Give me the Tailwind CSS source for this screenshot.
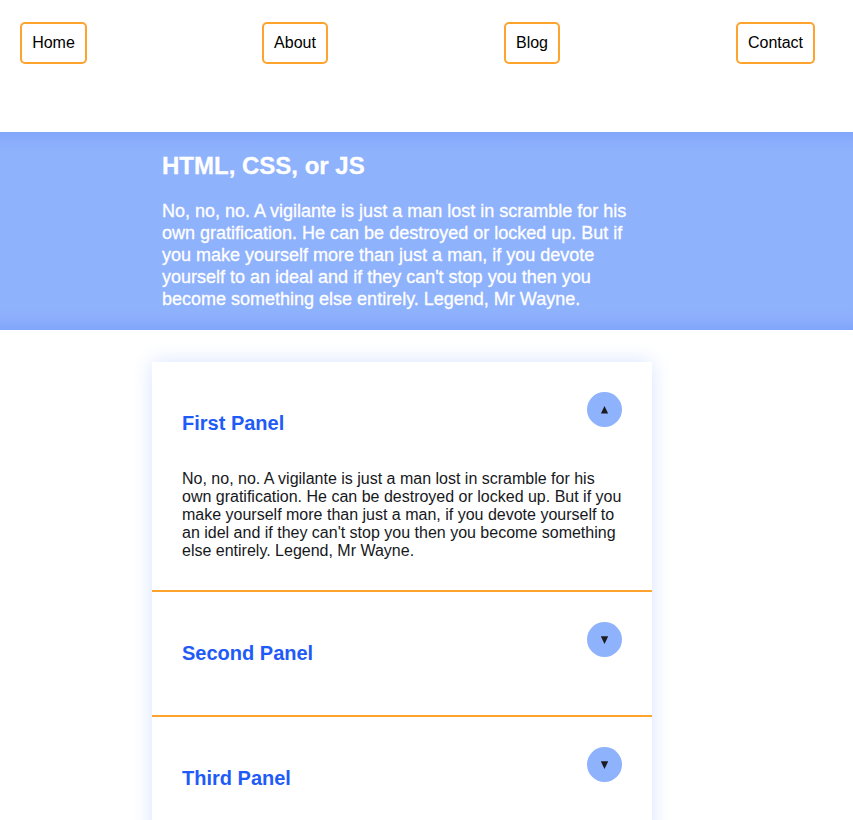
<!DOCTYPE html>
<html lang="en"><head><meta charset="utf-8"><title>Panels</title>
<script src="https://cdn.jsdelivr.net/npm/@tailwindcss/browser@4"></script></head>
<body class="h-[820px] overflow-hidden bg-white font-['Liberation_Sans',Arial,sans-serif] text-base leading-[18px] text-black">
<nav class="flex h-[132px] items-start pt-[22px] pl-5">
<a class="flex h-[42px] w-[67px] items-center justify-center rounded-[5px] border-2 border-[#ffa32f]">Home</a>
<a class="ml-[175px] flex h-[42px] w-[66px] items-center justify-center rounded-[5px] border-2 border-[#ffa32f]">About</a>
<a class="ml-[176px] flex h-[42px] w-[56px] items-center justify-center rounded-[5px] border-2 border-[#ffa32f]">Blog</a>
<a class="ml-[176px] flex h-[42px] w-[79px] items-center justify-center rounded-[5px] border-2 border-[#ffa32f]">Contact</a>
</nav>
<header class="h-[198px] bg-[linear-gradient(to_bottom,#80a6fb_0,#8badfc_10px,#8fb2fc_20px,#8fb2fc_178px,#8badfc_188px,#80a6fb_198px)] pt-5 pl-[162px] text-white">
<h1 class="text-2xl leading-7 font-bold [-webkit-text-stroke:0.3px_white]">HTML, CSS, or JS</h1>
<p class="mt-5 text-lg leading-[22px] whitespace-nowrap [-webkit-text-stroke:0.3px_white]">No, no, no. A vigilante is just a man lost in scramble for his<br>own gratification. He can be destroyed or locked up. But if<br>you make yourself more than just a man, if you devote<br>yourself to an ideal and if they can't stop you then you<br>become something else entirely. Legend, Mr Wayne.</p>
</header>
<main class="mt-8 ml-[152px] w-[500px] bg-white text-[#16181c] shadow-[0_0_20px_#d6e3ff]">
<section class="h-[230px] border-b-2 border-[#ffa32f] p-[30px]">
<div class="flex h-[78px] items-start justify-between"><h2 class="mt-5 text-xl leading-[23px] font-bold text-[#1f5bf7]">First Panel</h2><button class="flex size-[35px] items-center justify-center rounded-full bg-[#8fb2fc]"><svg class="mt-px" width="7" height="8" viewBox="0 0 7 8" fill="#1c1c20"><path d="M3.5 0 7.2 7.6H-.2Z"/></svg></button></div>
<p class="whitespace-nowrap">No, no, no. A vigilante is just a man lost in scramble for his<br>own gratification. He can be destroyed or locked up. But if you<br>make yourself more than just a man, if you devote yourself to<br>an idel and if they can't stop you then you become something<br>else entirely. Legend, Mr Wayne.</p>
</section>
<section class="flex h-[125px] items-start justify-between border-b-2 border-[#ffa32f] p-[30px]"><h2 class="mt-5 text-xl leading-[23px] font-bold text-[#1f5bf7]">Second Panel</h2><button class="flex size-[35px] items-center justify-center rounded-full bg-[#8fb2fc]"><svg class="mt-px" width="7" height="8" viewBox="0 0 7 8" fill="#1c1c20"><path d="M-.2.3H7.2L3.5 8Z"/></svg></button></section>
<section class="flex h-[125px] items-start justify-between p-[30px]"><h2 class="mt-5 text-xl leading-[23px] font-bold text-[#1f5bf7]">Third Panel</h2><button class="flex size-[35px] items-center justify-center rounded-full bg-[#8fb2fc]"><svg class="mt-px" width="7" height="8" viewBox="0 0 7 8" fill="#1c1c20"><path d="M-.2.3H7.2L3.5 8Z"/></svg></button></section>
</main>
</body></html>
